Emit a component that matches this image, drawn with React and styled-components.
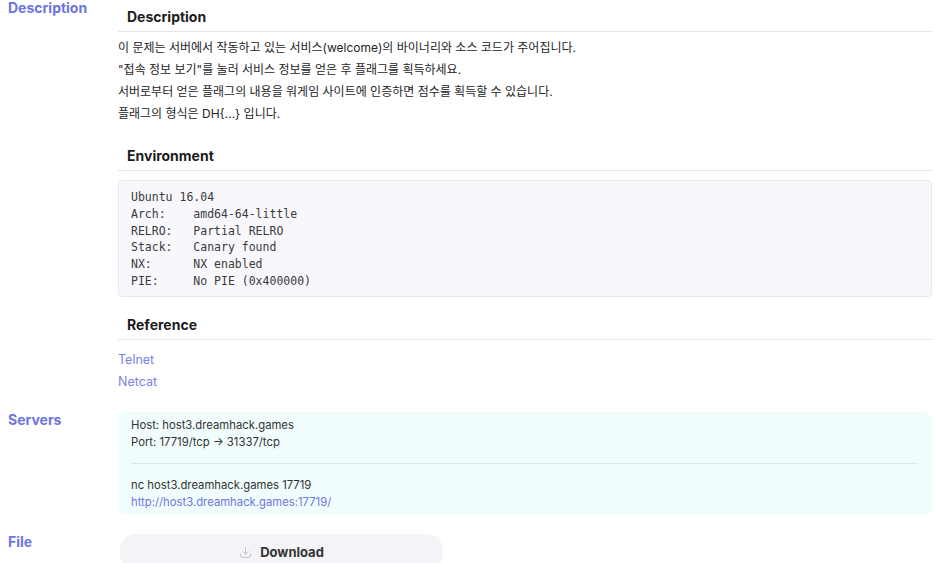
import styled, { createGlobalStyle } from 'styled-components';
import { Download } from 'lucide-react';

const GlobalStyle = createGlobalStyle`
  body {
    margin: 0;
    background: #ffffff;
    font-family: Inter, "Noto Sans CJK KR", sans-serif;
    color: #333333;
  }
`;

const Page = styled.div`
  padding: 0 3px 0 8px;
  display: flex;
  flex-direction: column;
  gap: 19px;
`;

const Row = styled.section`
  display: grid;
  grid-template-columns: 110px 1fr;
`;

const Label = styled.div`
  font-size: 14px;
  font-weight: 700;
  line-height: 15px;
  color: #6c74e2;
`;

const Content = styled.div`
  min-width: 0;
`;

const Heading = styled.h3`
  margin: ${(p) => p.$top || 0}px 0 0;
  padding: 0 9px 4px;
  font-size: 14px;
  font-weight: 700;
  line-height: 20px;
  color: #1c1c1e;
  border-bottom: 1px solid #e6e6ea;
`;

const Paragraphs = styled.div`
  margin-top: 5px;
  font-size: 12px;
  line-height: 22px;
  color: #242426;

  p {
    margin: 0;
  }
`;

const Pre = styled.pre`
  margin: 9px 0 0;
  padding: 8px 12px 6px;
  background: #f8f8fc;
  border: 1px solid #e7e7ec;
  border-radius: 4px;
  font-family: "DejaVu Sans Mono", monospace;
  font-size: 11.5px;
  line-height: 16.8px;
  color: #3a3a3c;
`;

const LinkList = styled.div`
  margin-top: 9px;
  display: flex;
  flex-direction: column;
`;

const Link = styled.a`
  font-size: 12.5px;
  line-height: 22px;
  color: #7a82ea;
  text-decoration: none;
`;

const ServerBox = styled.div`
  background: #f1fdfd;
  border-radius: 8px;
  padding: 5px 14px 4px 13px;
  font-size: 11.3px;
  line-height: 17px;
  color: #333333;
`;

const Divider = styled.hr`
  border: none;
  border-top: 1px solid #dde6e8;
  margin: 12px 0 13px;
`;

const ServerLink = styled.a`
  display: block;
  color: #6e77e2;
  text-decoration: none;
`;

const DownloadButton = styled.button`
  margin-left: 2px;
  width: 323px;
  height: 36px;
  border: none;
  border-radius: 16px;
  background: #f4f4f8;
  display: flex;
  align-items: center;
  justify-content: center;
  gap: 8px;
  padding-top: 2px;
  font-family: Inter, sans-serif;
  font-size: 13px;
  font-weight: 700;
  color: #333336;
  cursor: pointer;
`;

export default function App() {
  return (
    <>
      <GlobalStyle />
      <Page>
        <Row>
          <Label>Description</Label>
          <Content>
            <Heading $top={7}>Description</Heading>
            <Paragraphs>
              <p>이 문제는 서버에서 작동하고 있는 서비스(welcome)의 바이너리와 소스 코드가 주어집니다.</p>
              <p>"접속 정보 보기"를 눌러 서비스 정보를 얻은 후 플래그를 획득하세요.</p>
              <p>서버로부터 얻은 플래그의 내용을 워게임 사이트에 인증하면 점수를 획득할 수 있습니다.</p>
              <p>플래그의 형식은 DH{'{...}'} 입니다.</p>
            </Paragraphs>
            <Heading $top={21}>Environment</Heading>
            <Pre>{`Ubuntu 16.04
Arch:    amd64-64-little
RELRO:   Partial RELRO
Stack:   Canary found
NX:      NX enabled
PIE:     No PIE (0x400000)`}</Pre>
            <Heading $top={18}>Reference</Heading>
            <LinkList>
              <Link href="#">Telnet</Link>
              <Link href="#">Netcat</Link>
            </LinkList>
          </Content>
        </Row>
        <Row>
          <Label>Servers</Label>
          <ServerBox>
            <div>Host: host3.dreamhack.games</div>
            <div>Port: 17719/tcp → 31337/tcp</div>
            <Divider />
            <div>nc host3.dreamhack.games 17719</div>
            <ServerLink href="#">http://host3.dreamhack.games:17719/</ServerLink>
          </ServerBox>
        </Row>
        <Row>
          <Label>File</Label>
          <DownloadButton>
            <Download size={13} strokeWidth={1.5} color="#b9b9c2" />
            Download
          </DownloadButton>
        </Row>
      </Page>
    </>
  );
}
